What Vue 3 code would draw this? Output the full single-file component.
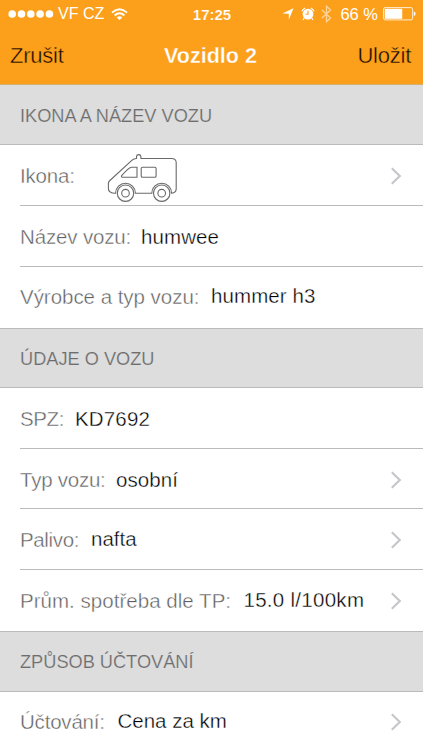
<script setup>
const groups = [
  {
    title: 'IKONA A NÁZEV VOZU',
    rows: [
      { label: 'Ikona:', icon: true, chevron: true, lead: 81, ls: -0.2 },
      { label: 'Název vozu:', value: 'humwee', lead: 121, ls: -0.15, vls: 0.1 },
      { label: 'Výrobce a typ vozu:', value: 'hummer h3', lead: 191, ls: -0.03, vls: 0.1, raised: true },
    ],
  },
  {
    title: 'ÚDAJE O VOZU',
    short: true,
    rows: [
      { label: 'SPZ:', value: 'KD7692', lead: 55, ls: -0.4, vls: 0.15 },
      { label: 'Typ vozu:', value: 'osobní', lead: 96, ls: -0.25, vls: 0.1, chevron: true, short: true },
      { label: 'Palivo:', value: 'nafta', lead: 71, ls: -0.35, vls: 0, chevron: true, raised: true },
      { label: 'Prům. spotřeba dle TP:', value: '15.0 l/100km', lead: 223.5, ls: 0.03, vls: 0.28, chevron: true, raised: true },
    ],
  },
  {
    title: 'ZPŮSOB ÚČTOVÁNÍ',
    rows: [{ label: 'Účtování:', value: 'Cena za km', lead: 97.5, ls: -0.2, vls: 0, chevron: true, raised: true }],
  },
]
</script>

<template>
  <div class="screen">
    <header class="top">
      <div class="status">
        <div class="side">
          <svg class="dots" width="46" height="10" viewBox="0 0 46 10">
            <circle v-for="i in 5" :key="i" :cx="4.2 + (i - 1) * 9.3" cy="5" r="3.8" fill="#fff" />
          </svg>
          <span class="carrier">VF CZ</span>
          <svg class="wifi" width="17" height="13" viewBox="0 0 17 13" fill="none" stroke="#fff" stroke-width="1.9">
            <path d="M1 4.6Q8.5-2 16 4.6" />
            <path d="M3.6 7.5Q8.5 3.2 13.4 7.5" />
            <path d="M5.7 9.3Q8.5 7 11.3 9.3L8.5 12.2Z" fill="#fff" stroke="none" />
          </svg>
        </div>
        <span class="clock">17:25</span>
        <div class="side right">
          <svg width="12" height="12" viewBox="0 0 12 12"><path d="M11.5.3 6.8 11.7V5.8L.3 5.5Z" fill="#fff" /></svg>
          <svg class="alarm" width="14" height="14" viewBox="0 0 14 14">
            <path d="M.9 4.3A7 7 0 0 1 4.2 1M9.8 1a7 7 0 0 1 3.3 3.3M3.2 11.2 2 12.8M10.8 11.2l1.2 1.6" stroke="#fff" stroke-width="1.2" fill="none" />
            <circle cx="7" cy="7.1" r="5.4" fill="#fff" />
            <path d="M7 3.8v3.5H4.6" stroke="#fca01b" stroke-width="1.1" fill="none" />
          </svg>
          <svg class="bluetooth" width="11" height="18" viewBox="0 0 11 18" fill="none" stroke="#fff" stroke-opacity=".55" stroke-width="1.3">
            <path d="M.9 4.9 9.6 13 5.5 16.8V1.2L9.6 5 .9 13.1" />
          </svg>
          <span class="percent">66 %</span>
          <svg class="battery" width="33" height="14" viewBox="0 0 33 14">
            <rect x=".6" y=".6" width="29" height="12.3" rx="1.6" fill="none" stroke="#fff" stroke-opacity=".8" />
            <rect x="1.8" y="1.8" width="17.4" height="10" fill="#fff" />
            <path d="M30.8 4.5q1.8.6 1.8 2.3t-1.8 2.3Z" fill="#fff" />
          </svg>
        </div>
      </div>
      <nav class="nav">
        <span class="action">Zrušit</span>
        <h1>Vozidlo 2</h1>
        <span class="action end">Uložit</span>
      </nav>
    </header>

    <section v-for="g in groups" :key="g.title">
      <h2 :class="{ short: g.short }">{{ g.title }}</h2>
      <div v-for="r in g.rows" :key="r.label" class="row" :class="{ short: r.short }">
        <span class="label" :style="{ width: r.lead + 'px', letterSpacing: r.ls + 'px' }">{{ r.label }}</span>
        <svg v-if="r.icon" class="van" width="78" height="56" viewBox="0 0 78 56" fill="none" stroke="#6a6a6a" stroke-width="1.1">
          <path d="M14.6 44.2H13Q7.4 43.5 7.4 39.5V34.5Q7.4 32.8 8.9 31.5L30.8 11.3Q32.8 9.5 35.5 9.5V7.6Q35.7 5.6 37.7 5.6T39.9 7.6V9.5H70.5Q75.2 9.7 75.2 13.5V39.8Q75.2 43.9 70.6 44.2A9.9 9.9 0 0 0 50.8 44.2H34.4A9.9 9.9 0 0 0 14.6 44.2Z" />
          <path d="M36 18.2V28.2H21.2Q19.9 27.9 20.7 26.6Q27.2 19 30.3 18.2ZM41.5 18.2H53.8Q55.1 18.2 55.1 19.5V26.9Q55.1 28.2 53.8 28.2H41.5Q40.2 28.2 40.2 26.9V19.5Q40.2 18.2 41.5 18.2Z" />
          <circle cx="24.5" cy="44.2" r="8.2" /><circle cx="24.5" cy="44.2" r="3.8" />
          <circle cx="60.7" cy="44.2" r="8.2" /><circle cx="60.7" cy="44.2" r="3.8" />
        </svg>
        <span v-else class="value" :class="{ raised: r.raised }" :style="{ letterSpacing: r.vls + 'px' }">{{ r.value }}</span>
        <svg v-if="r.chevron" class="chevron" width="12" height="18" viewBox="0 0 12 18">
          <path d="M1.8 1.2 9.8 9 1.8 16.8" fill="none" stroke="#c5c5ca" stroke-width="2.1" />
        </svg>
      </div>
    </section>
  </div>
</template>

<style>
body { margin: 0; background: #fff; overflow: hidden; }
</style>

<style scoped>
.screen { width: 423px; height: 750px; overflow: hidden; background: #fff; font-family: "Liberation Sans", Arial, sans-serif; white-space: nowrap; }
.top { box-sizing: border-box; height: 85px; background: #fca01b; border-bottom: 1px solid #d3b071; }
.status { display: grid; grid-template-columns: 1fr auto 1fr; align-items: center; height: 28px; padding: 0 7px 0 8px; color: #fff; font-size: 16px; }
.side { display: flex; align-items: center; }
.right { justify-content: flex-end; }
.carrier { margin-left: 4px; }
.wifi { margin-left: 7px; }
.clock { font-size: 15px; font-weight: bold; -webkit-text-stroke: .2px #fca01b; }
.alarm { margin-left: 7px; }
.bluetooth { margin-left: 6px; }
.percent { margin-left: 8px; font-size: 16.5px; }
.battery { margin-left: 5px; }
.nav { display: grid; grid-template-columns: 1fr auto 1fr; align-items: center; height: 56px; padding: 0 12px 0 10px; }
h1 { margin: 0; font-size: 21.5px; color: #fff; -webkit-text-stroke: .3px #fca01b; }
.action { font-size: 22px; letter-spacing: -.25px; color: #150b00; -webkit-text-stroke: .4px #fca01b; }
.end { text-align: right; }
h2 { box-sizing: border-box; height: 61px; margin: 0; padding: 1px 0 0 20px; border-bottom: 1px solid #bbb; background: #ddd; color: #6d6d6d; font-size: 18.2px; font-weight: normal; line-height: 60px; -webkit-text-stroke: .2px #ddd; }
section:first-of-type h2 { height: 60px; }
section:not(:first-of-type) h2 { border-top: 1px solid #bbb; padding-top: 0; }
h2.short { height: 60px; }
.row { box-sizing: border-box; display: flex; align-items: center; height: 61px; margin-left: 20px; padding-top: 2px; border-bottom: 1px solid #bbb; font-size: 20.5px; }
.row.short { height: 60px; }
.row:last-child { border-bottom-color: transparent; padding-top: 0; }
section:nth-of-type(2) .row:last-child { padding-top: 1px; }
.label { flex: none; color: #606060; -webkit-text-stroke: .4px #fff; }
.value { color: #000; -webkit-text-stroke: .35px #fff; }
.raised { margin-bottom: 2px; }
.van { flex: none; margin-top: 1px; }
.chevron { margin-left: auto; margin-right: 21px; }
</style>
